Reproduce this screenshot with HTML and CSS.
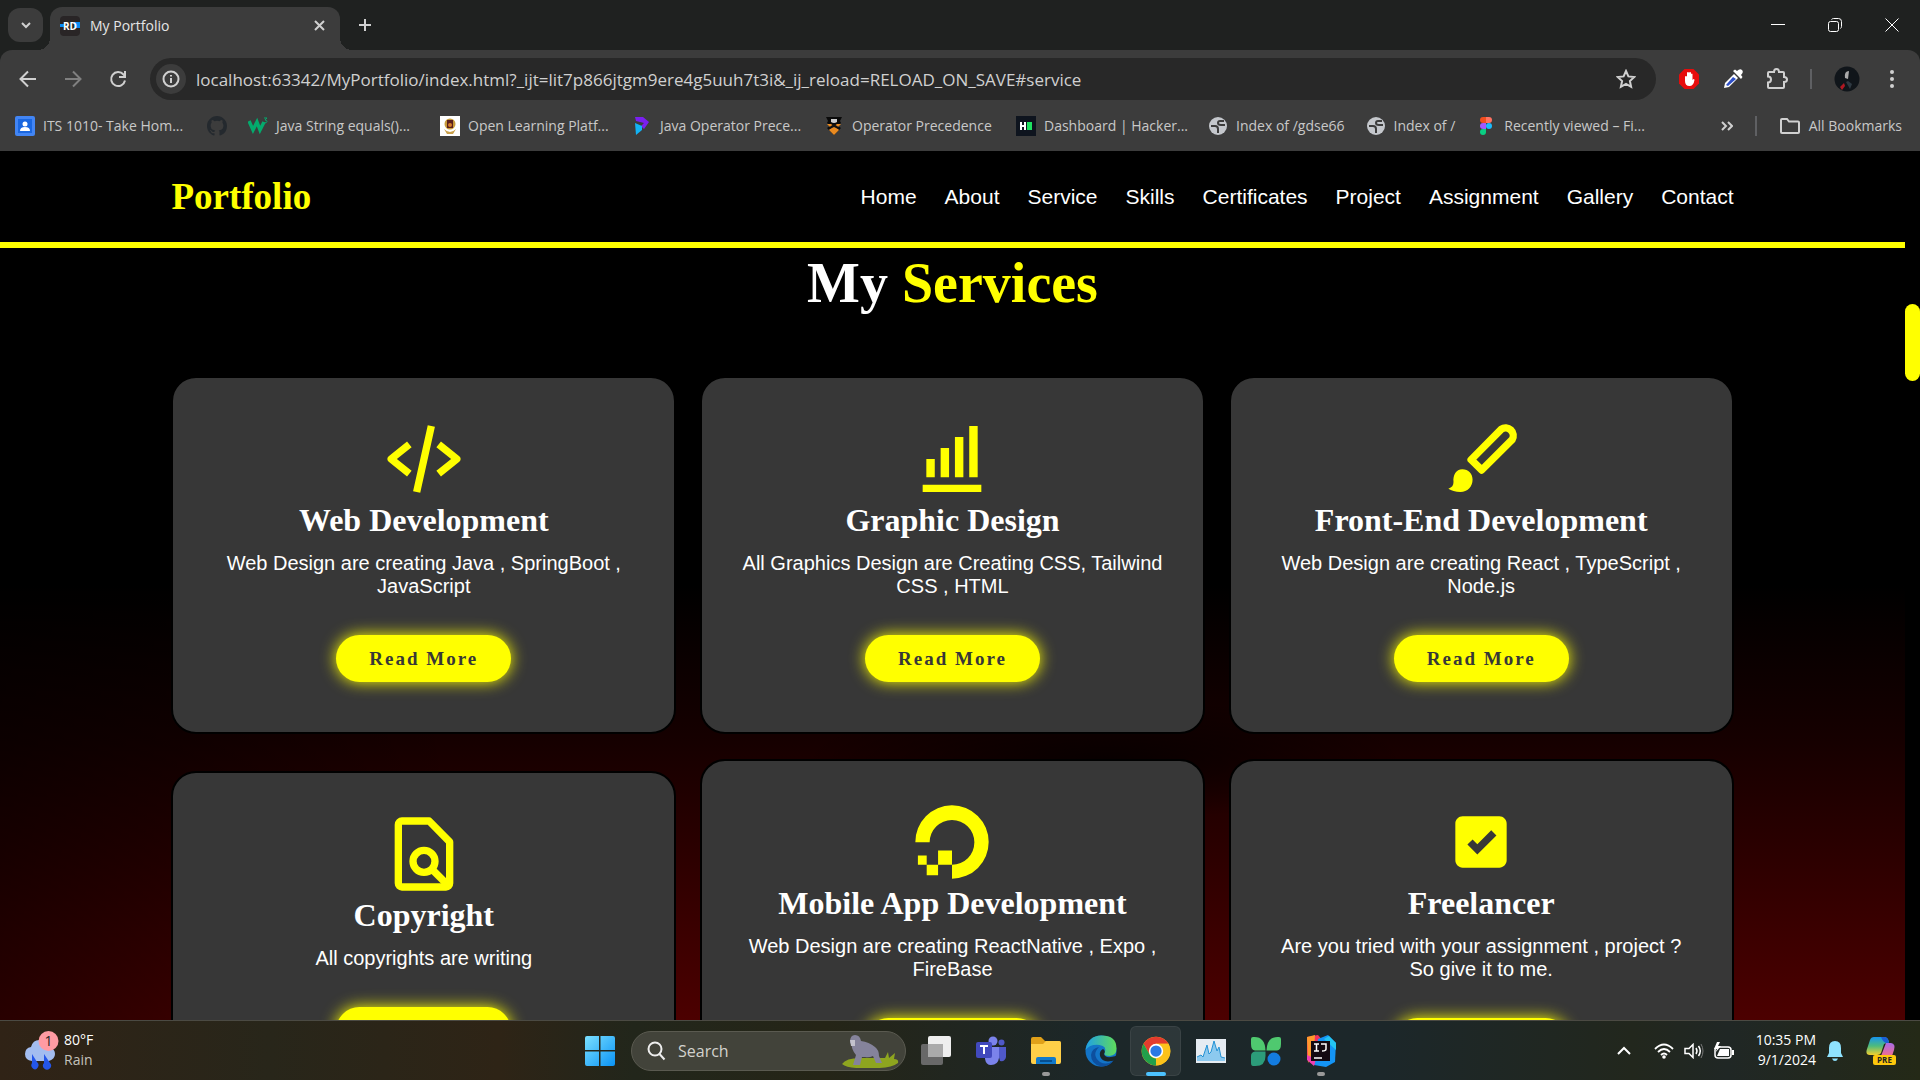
FILE: index.html
```html
<!DOCTYPE html>
<html lang="en">
<head>
<meta charset="utf-8">
<title>My Portfolio</title>
<link rel="stylesheet" href="styles.css">
</head>
<body>
<header class="browser">
  <div class="tabstrip">
    <button class="tab-search" aria-label="Search tabs"><svg width="12" height="12" viewBox="0 0 12 12"><path class="ln bright" d="M2 4l4 4 4-4"/></svg></button>
    <div class="tab">
      <svg width="20" height="20" viewBox="0 0 20 20"><rect width="20" height="20" rx="4" fill="#292526"/><path d="M0 8h5v3H0zM14 6h6v6h-6z" fill="#0a8cf5"/><text x="10" y="14" class="fav-rd">RD</text></svg>
      <span class="tab-title">My Portfolio</span>
      <button class="plain" aria-label="Close tab"><svg width="12" height="12" viewBox="0 0 12 12"><path class="ln bright" d="M1 1l9 9M10 1l-9 9"/></svg></button>
    </div>
    <button class="plain new-tab" aria-label="New tab"><svg width="14" height="14" viewBox="0 0 14 14"><path class="ln bright" d="M7 1v12M1 7h12"/></svg></button>
    <div class="window-buttons">
      <button class="plain" aria-label="Minimize"><svg width="14" height="14" viewBox="0 0 14 14"><path class="thin" d="M0 6.500h14"/></svg></button>
      <button class="plain" aria-label="Restore"><svg width="14" height="14" viewBox="0 0 14 14"><rect class="thin" x=".5" y="3.500" width="10" height="10" rx="2"/><path class="thin" d="M3.500 1.500q1-1 2-1h5q3 0 3 3v5q0 1-1 2"/></svg></button>
      <button class="plain" aria-label="Close"><svg width="14" height="14" viewBox="0 0 14 14"><path class="thin" d="M.5.5l13 13M13.500.5l-13 13"/></svg></button>
    </div>
  </div>
  <div class="toolbar">
    <button class="plain nav-btn" aria-label="Back"><svg width="18" height="18" viewBox="0 0 18 18"><path class="ln bright" d="M17 9H2M9 1.500L1.500 9 9 16.500"/></svg></button>
    <button class="plain nav-btn" aria-label="Forward"><svg width="18" height="18" viewBox="0 0 18 18"><path class="ln dim" d="M1 9h15M9 1.500L16.500 9 9 16.500"/></svg></button>
    <button class="plain nav-btn" aria-label="Reload"><svg width="18" height="18" viewBox="0 0 18 18"><path class="ln bright" d="M16 10.500A7 7 0 1 1 14.500 4.500L16 6.500M16 1v6h-6"/></svg></button>
    <div class="omnibox">
      <span class="site-info"><svg width="18" height="18" viewBox="0 0 18 18"><circle class="ln bright" cx="9" cy="9" r="7.500"/><path class="ln bright" d="M9 8v5M9 5v1.600"/></svg></span>
      <input class="url" type="text" aria-label="Address" value="localhost:63342/MyPortfolio/index.html?_ijt=lit7p866jtgm9ere4g5uuh7t3i&amp;_ij_reload=RELOAD_ON_SAVE#service">
      <button class="plain" aria-label="Bookmark this page"><svg width="20" height="20" viewBox="0 0 20 20"><path class="ln bright" d="M10 2l2.400 5.400 5.900.6-4.400 4 1.200 5.800L10 14.800l-5.100 3L6.100 12 1.700 8l5.900-.6z"/></svg></button>
    </div>
    <div class="extensions">
      <svg width="22" height="22" viewBox="0 0 22 22"><path d="M6.500 1h9L21 6.500v9L15.500 21h-9L1 15.500v-9z" fill="#e60c0c"/><path d="M7 9q0-1 1-1t1 1V5q0-1 1-1 .7 0 1 1 .3-1 1-1 1 0 1 1v1q1-1 1.500 0v6l1-1q1 0 1 1-1 6-5 6-4.500 0-4.500-5z" fill="#fff"/></svg>
      <svg width="22" height="22" viewBox="0 0 22 22"><path d="M12 6L3 15l-1 5 5-1 9-9z" fill="#fff"/><path d="M11 9l3 2-8 7-2-1z" fill="#2f50c8"/><path d="M11 3l8 8 1.500-2-1.500-2q3-3 1-5t-5 1l-2-1.500z" fill="#fff"/></svg>
      <svg width="22" height="22" viewBox="0 0 22 22"><path class="ln bright" d="M2 5q0-1 1-1h5q0-3 2.500-3T13 4h4q1 0 1 1v4q3 0 3 2.500T18 14v5q0 1-1 1H3q-1 0-1-1v-4.500q3 0 3-3t-3-3z"/></svg>
      <span class="divider"></span>
      <svg width="26" height="26" viewBox="0 0 26 26"><circle cx="13" cy="13" r="12.500" fill="#10151a"/><path d="M11 12q-1-7 4-7l-1 8z" fill="#aaa"/><path d="M6 21l4-4 1 3-3 4z" fill="#b01822"/><path d="M12 16l2-1 4 3-2 5z" fill="#2f3a42"/></svg>
      <svg class="menu-dots" width="6" height="20" viewBox="0 0 6 20"><g fill="#d0d0d0"><circle cx="3" cy="3" r="2"/><circle cx="3" cy="10" r="2"/><circle cx="3" cy="17" r="2"/></g></svg>
    </div>
  </div>
  <nav class="bookmarks" aria-label="Bookmarks">
    <a class="bm wide" href="#"><svg width="20" height="20" viewBox="0 0 20 20"><rect width="20" height="20" rx="2" fill="#4285f4"/><rect x="3" y="3" width="14" height="14" fill="#1a67e0"/><circle cx="10" cy="8" r="2.500" fill="#fff"/><path d="M5 15q0-4 5-4t5 4z" fill="#fff"/></svg>ITS 1010- Take Hom...</a>
    <a class="bm" href="#" aria-label="GitHub"><svg width="20" height="20" viewBox="0 0 16 16"><path fill="#24292e" d="M8 0C3.580 0 0 3.580 0 8c0 3.540 2.290 6.530 5.470 7.590.4.070.55-.17.55-.38 0-.19-.01-.82-.01-1.490-2.010.37-2.530-.49-2.690-.94-.09-.23-.48-.94-.82-1.130-.28-.15-.68-.52-.01-.53.63-.01 1.080.58 1.230.82.72 1.210 1.870.87 2.330.66.070-.52.28-.87.51-1.070-1.780-.2-3.640-.89-3.640-3.950 0-.87.31-1.590.82-2.150-.08-.2-.36-1.020.08-2.120 0 0 .67-.21 2.200.82a7.600 7.600 0 0 1 4 0c1.530-1.040 2.200-.82 2.200-.82.44 1.100.16 1.920.08 2.120.51.56.82 1.270.82 2.150 0 3.070-1.870 3.750-3.650 3.950.29.25.54.73.54 1.480 0 1.070-.01 1.930-.01 2.200 0 .21.15.46.55.38A8 8 0 0 0 16 8c0-4.420-3.580-8-8-8z"/></svg></a>
    <a class="bm wide" href="#"><svg width="20" height="20" viewBox="0 0 20 20"><path d="M1 5l4 9 4-8 3 8 4-8" fill="none" stroke="#04aa6d" stroke-width="3.500"/><path d="M16 2h3l-2 2q2 0 2 1.500T16 7" fill="none" stroke="#04aa6d"/></svg>Java String equals()...</a>
    <a class="bm wide" href="#"><svg width="20" height="20" viewBox="0 0 20 20"><rect width="20" height="20" fill="#fff"/><circle cx="10" cy="8" r="5.500" fill="#c79b3b"/><path d="M7 4h6v8H7z" fill="#5a1f1c"/><circle cx="10" cy="9" r="2" fill="#d27b27"/><path d="M4 13q6 6 12 0l-3 5H7z" fill="#c9a04b"/></svg>Open Learning Platf...</a>
    <a class="bm wide" href="#"><svg width="20" height="20" viewBox="0 0 20 20"><path d="M3 1h8l6 5-5 7-3-3 3-3-8-2z" fill="#7a1ff0"/><path d="M3 7l7 3v4l-6 5z" fill="#12b3f5"/></svg>Java Operator Prece...</a>
    <a class="bm wide" href="#"><svg width="20" height="20" viewBox="0 0 20 20"><path d="M2 1h16l-2 4 1 2-3 3 3 2-7 7-7-7 3-2-3-3 1-2z" fill="#0a0a0a"/><path d="M7 3h6v3q-3 2-6 0z" fill="#ccc"/><path d="M3 8l4 0 3 2 3-2 4 0-4 4 2 2-5 5-5-5 2-2z" fill="#e98a20"/><path d="M4 12l6-4 6 4-2 1-4-2-4 2z" fill="#111"/></svg>Operator Precedence</a>
    <a class="bm wide" href="#"><svg width="20" height="20" viewBox="0 0 20 20"><rect width="20" height="20" fill="#0e141e"/><path d="M4 6h2v3h2V6h2v8H8v-3H6v3H4z" fill="#fff"/><path d="M11 6h5v8h-5z" fill="#1ee25f"/></svg>Dashboard | Hacker...</a>
    <a class="bm" href="#"><svg width="20" height="20" viewBox="0 0 20 20"><circle cx="10" cy="10" r="9" fill="#c4c7cc"/><path d="M3 10h4q3 0 3 3v4M16 5h-4q-2 0-2 2t3 2h4" fill="none" stroke="#3c3c3c" stroke-width="2"/></svg>Index of /gdse66</a>
    <a class="bm" href="#"><svg width="20" height="20" viewBox="0 0 20 20"><circle cx="10" cy="10" r="9" fill="#c4c7cc"/><path d="M3 10h4q3 0 3 3v4M16 5h-4q-2 0-2 2t3 2h4" fill="none" stroke="#3c3c3c" stroke-width="2"/></svg>Index of /</a>
    <a class="bm" href="#"><svg width="20" height="20" viewBox="0 0 20 20"><path d="M10 1H7a3 3 0 0 0 0 6h3z" fill="#f24e1e"/><path d="M10 1h3a3 3 0 0 1 0 6h-3z" fill="#ff7262"/><path d="M10 7H7a3 3 0 0 0 0 6h3z" fill="#a259ff"/><circle cx="13" cy="10" r="3" fill="#1abcfe"/><path d="M10 13H7a3 3 0 1 0 3 3z" fill="#0acf83"/></svg>Recently viewed – Fi...</a>
    <div class="bm-end">
      <button class="plain" aria-label="More bookmarks"><svg width="12" height="12" viewBox="0 0 12 12"><path class="ln bright" d="M1 2l4 4-4 4M7 2l4 4-4 4"/></svg></button>
      <span class="divider"></span>
      <a class="bm" href="#"><svg width="22" height="18" viewBox="0 0 22 18"><path class="ln bright" d="M2 3q0-1 1-1h5l2 2.500h9q1 0 1 1V15q0 1-1 1H3q-1 0-1-1z"/></svg>All Bookmarks</a>
    </div>
  </nav>
</header>

<div class="viewport">
  <div class="page">
    <header class="site-header">
      <a class="logo" href="#home">Portfolio</a>
      <nav class="site-nav">
        <a href="#home">Home</a><a href="#about">About</a><a href="#service">Service</a><a href="#skills">Skills</a><a href="#certificates">Certificates</a><a href="#project">Project</a><a href="#assignment">Assignment</a><a href="#gallery">Gallery</a><a href="#contact">Contact</a>
      </nav>
    </header>
    <main class="services">
      <h2 class="heading">My <span>Services</span></h2>
      <div class="cards">
        <article class="card">
          <svg class="card-icon" viewBox="0 0 24 24"><path d="M7.375 16.781l1.250-1.562L4.601 12l4.024-3.219-1.250-1.562-5 4a1 1 0 0 0 0 1.562l5 4zm9.250-9.562l-1.250 1.562L19.399 12l-4.024 3.219 1.250 1.562 5-4a1 1 0 0 0 0-1.562l-5-4zm-1.649-4.003l-4 18-1.953-.434 4-18z"/></svg>
          <h3>Web Development</h3>
          <p>Web Design are creating Java , SpringBoot , JavaScript</p>
          <a class="btn" href="#web">Read More</a>
        </article>
        <article class="card">
          <svg class="card-icon" viewBox="0 0 24 24"><path d="M4 19h16v2H4zM5 12h2.300v5H5zM8.900 9h2.300v8H8.900zM12.800 6h2.300v11h-2.300zM16.700 3H19v14h-2.300z"/></svg>
          <h3>Graphic Design</h3>
          <p>All Graphics Design are Creating CSS, Tailwind CSS , HTML</p>
          <a class="btn" href="#graphic">Read More</a>
        </article>
        <article class="card">
          <svg class="card-icon" viewBox="0 0 24 24"><path class="stroke" d="M9.300 12.200L17.500 3.900A2.100 2.100 0 0 1 20.500 6.700L12.200 15z"/><path d="M6.900 14.800C8.600 14.800 9.700 16.100 9.700 17.600 9.700 19.600 8.300 21 6.400 21 5 21 3.900 20.600 3.100 20.100 4.100 19.800 4.500 19.200 4.500 18.300 4.300 16.400 5.200 14.800 6.900 14.800z"/></svg>
          <h3>Front-End Development</h3>
          <p>Web Design are creating React , TypeScript , Node.js</p>
          <a class="btn" href="#frontend">Read More</a>
        </article>
        <article class="card">
          <svg class="card-icon" viewBox="0 0 24 24"><path class="stroke" d="M6 3h7.400L19 8.700V20a1 1 0 0 1-1 1H6a1 1 0 0 1-1-1V4a1 1 0 0 1 1-1z"/><circle class="stroke" cx="12" cy="14" r="3"/><path class="stroke" d="M14.200 16.200L18.500 20.500"/></svg>
          <h3>Copyright</h3>
          <p>All copyrights are writing</p>
          <a class="btn" href="#copyright">Read More</a>
        </article>
        <article class="card">
          <svg class="card-icon" viewBox="0 0 24 24"><path d="M2 12.100A10 10 0 1 1 12 22V18.200A6.100 6.100 0 1 0 5.900 12.100zM8.200 14.300H12v3.900H8.200zM5.100 18.200h3.100v2.900H5.100zM2.700 15.700h2.400v2.500H2.700z"/></svg>
          <h3>Mobile App Development</h3>
          <p>Web Design are creating ReactNative , Expo , FireBase</p>
          <a class="btn" href="#mobile">Read More</a>
        </article>
        <article class="card">
          <svg class="card-icon" viewBox="0 0 24 24"><path d="M7 5c-1.103 0-2 .897-2 2v10c0 1.103.897 2 2 2h10c1.103 0 2-.897 2-2V7c0-1.103-.897-2-2-2H7zm4 10.414l-2.707-2.707 1.414-1.414L11 12.586l3.793-3.793 1.414 1.414L11 15.414z"/></svg>
          <h3>Freelancer</h3>
          <p>Are you tried with your assignment , project ? So give it to me.</p>
          <a class="btn" href="#freelancer">Read More</a>
        </article>
      </div>
    </main>
  </div>
  <div class="scrollbar"><div class="thumb"></div></div>
</div>

<footer class="taskbar">
  <div class="weather">
    <svg width="36" height="40" viewBox="0 0 36 40"><path d="M8 30q-7-1-7-7t6-7q2-8 10-7 8 1 9 8 5 1 5 6t-6 7z" fill="#a3bdf0"/><path d="M8 23l5 8a3.500 4 0 1 1-5 1zM20 23l6 9a4 4 0 1 1-6 0z" fill="#2456ea"/><circle cx="24.500" cy="10" r="10" fill="#ff9ba3"/><text x="24.500" y="15" class="badge-num">1</text></svg>
    <div class="two-line"><span>80°F</span><span class="muted">Rain</span></div>
  </div>
  <div class="apps">
    <button class="app" aria-label="Start"><svg width="30" height="30" viewBox="0 0 30 30"><defs><linearGradient id="win" x2="1" y2="1"><stop stop-color="#7be0ff"/><stop offset="1" stop-color="#0a93f5"/></linearGradient></defs><path fill="url(#win)" d="M2 0h12v14H0V2q0-2 2-2zM15.500 0H28q2 0 2 2v12H15.500zM0 15.500h14V30H2q-2 0-2-2zM15.500 15.500H30V28q0 2-2 2H15.500z"/></svg></button>
    <label class="search">
      <svg width="20" height="20" viewBox="0 0 20 20"><circle cx="9" cy="8" r="6.500" fill="none" stroke="#eee" stroke-width="2"/><path d="M13.500 13l5 5.500" stroke="#eee" stroke-width="2"/></svg>
      <input type="text" placeholder="Search" aria-label="Search">
      <svg width="58" height="34" viewBox="0 0 58 34"><path d="M1 30q4-6 18-6h25l3-6 1 6 6-5-1 6q5 0 4 4-8 6-30 5-20 1-26-4z" fill="#8ea51f"/><path d="M9 8q0-7 5-7t6 6q8 1 14 6 4 3 4 9l3 7h-6l-3-7q-4 2-8 1l-3 0-2 8h-7l3-10q-5-6-4-11-2 0-2-2z" fill="#85839b"/><path d="M9 6h5v6h-4z" fill="#c3c2cd"/></svg>
    </label>
    <button class="app" aria-label="Task view"><svg width="30" height="30" viewBox="0 0 30 30"><rect y="8" width="22" height="21" rx="2" fill="#686868"/><rect x="7" width="23" height="21" rx="2" fill="#eee"/><path d="M7 8h15v13H7z" fill="#aaa"/></svg></button>
    <button class="app" aria-label="Teams"><svg width="30" height="30" viewBox="0 0 30 30"><circle cx="17" cy="5" r="4.500" fill="#7b83eb"/><circle cx="25.500" cy="6.500" r="3" fill="#5059c9"/><path d="M20 11h10v10q-1 5-6 4z" fill="#5059c9"/><path d="M9 11h14v11q-1 7-8 7-5 0-6-6z" fill="#7b83eb"/><rect y="6" width="16" height="16" rx="2" fill="#4149bd"/><path d="M4 10h8M8 10v8" stroke="#fff" stroke-width="2"/></svg></button>
    <button class="app" aria-label="File Explorer"><svg width="32" height="30" viewBox="0 0 32 30"><path d="M1 3q0-2 2-2h8l4 4h14q2 0 2 3v8H1z" fill="#e0a019"/><path d="M1 8l12 0 3-3h13q2 0 2 2v19q0 2-2 2H3q-2 0-2-2z" fill="#ffcf48"/><path d="M6 28v-5q0-2 2-2h16q2 0 2 2v5z" fill="#127acb"/><path d="M10 25h12" stroke="#064f91" stroke-width="2"/></svg><i class="dot"></i></button>
    <button class="app" aria-label="Edge"><svg width="32" height="32" viewBox="0 0 32 32"><defs><linearGradient id="edge" x2="1"><stop stop-color="#1f9fe6"/><stop offset="1" stop-color="#5fdc5b"/></linearGradient></defs><circle cx="16" cy="16" r="15.500" fill="#1374c7"/><path d="M.5 15Q3 .5 16.500.5q15 0 15 13 0 7-7 7.500-6 0-5-3 3-7-5-8Q5 9 .5 15z" fill="url(#edge)"/><path d="M14 12q-8 8 1 15 7 4 14-2-5 7-13 6.500Q6 29 6 20q1-7 8-8z" fill="#0d4f9e"/><path d="M18 14q3 2 1 5 1 5 12 2v4l-4 1q-10 2-12-5-1-5 3-7z" fill="#1b2628"/></svg></button>
    <button class="app active" aria-label="Chrome"><svg width="30" height="32" viewBox="0 0 48 48"><circle cx="24" cy="24" r="23" fill="#fcc21b"/><path d="M4.100 12.500A23 23 0 0 1 43.900 12.500H24L14 30z" fill="#e33b2e"/><path d="M4.100 12.500L14 29.800q4 6 10 6L24 47A23 23 0 0 1 4.100 12.500z" fill="#229f4b"/><path d="M34 30L24 47A23 23 0 0 0 43.900 12.500H24z" fill="#fcc21b"/><circle cx="24" cy="24" r="11.500" fill="#fff"/><circle cx="24" cy="24" r="9" fill="#2b78e4"/></svg><i class="dot on"></i></button>
    <button class="app" aria-label="Resource Monitor"><svg width="30" height="24" viewBox="0 0 30 24"><rect width="30" height="24" fill="#e6ecf2"/><path d="M1 18l4-2 2 2 4-12 2 9 2-2 3-11 3 10 2-4 2 10 4 1v3H1z" fill="#8cc9ef"/><path d="M1 18l4-2 2 2 4-12 2 9 2-2 3-11 3 10 2-4 2 10 4 1" fill="none" stroke="#2492d4"/></svg></button>
    <button class="app" aria-label="Clover"><svg width="30" height="30" viewBox="0 0 30 30"><path d="M2 1q12-1 12.500 13.500H4Q0 14 0 8V3q0-2 2-2zM28 1q-12-1-12.500 13.500H26q4-.5 4-6.500V3q0-2-2-2z" fill="#4fc96f"/><path d="M4 15.500h10.500V20q0 10-10 10H2q-2 0-2-3v-7q0-4 4-4.500z" fill="#2c9c7a"/><circle cx="23" cy="23" r="6.500" fill="#137ce0"/></svg></button>
    <button class="app" aria-label="IntelliJ IDEA"><svg width="30" height="32" viewBox="0 0 30 32"><path d="M1 2l11-2 5 6-8 24-8-8z" fill="#f3315f"/><path d="M1 2l8-2-1 16-6 12z" fill="#ff9a2c"/><path d="M12 4L22 0l8 8-1 19-9 5-12-2z" fill="#1494f5"/><path d="M18 4l5-3 7 7v7z" fill="#24c4f2"/><path d="M1 20l9 4-2 7-7-6z" fill="#f13fb2"/><path d="M5 6h19v20H5z" fill="#140a12"/><path d="M8 9h5M10.500 9v7M8 16h5M15 9h5v5q0 2-4 2M8 23h8" fill="none" stroke="#fff" stroke-width="1.500"/></svg><i class="dot"></i></button>
  </div>
  <div class="tray">
    <svg width="16" height="10" viewBox="0 0 16 10"><path d="M2 8l6-6 6 6" fill="none" stroke="#fff" stroke-width="2"/></svg>
    <svg class="wifi" width="20" height="16" viewBox="0 0 20 16"><g fill="none" stroke="#fff" stroke-width="1.800"><path d="M1 6q9-9 18 0M4 9q6-6 12 0M7 12q3-3 6 0"/></g><circle cx="10" cy="14" r="1.800" fill="#fff"/></svg>
    <svg width="20" height="16" viewBox="0 0 20 16"><path d="M1 5.500h4L9 1.500v13l-4-4H1z" fill="none" stroke="#fff" stroke-width="1.500"/><path d="M12 5q2 3 0 6M14.500 3q3.500 5 0 10" fill="none" stroke="#fff" stroke-width="1.500"/><path d="M17 1q4 7 0 14" fill="none" stroke="#777"/></svg>
    <svg width="20" height="18" viewBox="0 0 20 18"><rect x="1" y="5" width="16" height="11" rx="3" fill="none" stroke="#fff" stroke-width="1.500"/><path d="M3 14l3-7h9v7zM18 8h2v5h-2z" fill="#fff"/><path d="M3 0L0 7h3L1 11l6-7H4l2-4z" fill="#fff"/></svg>
    <div class="two-line clock"><span>10:35 PM</span><span>9/1/2024</span></div>
    <svg width="18" height="20" viewBox="0 0 18 20"><path d="M9 0q6 0 6 7v5l2 4H1l2-4V7q0-7 6-7zM6 17.500h6q-1 2.500-3 2.500t-3-2.500z" fill="#8fe3ff"/></svg>
    <svg class="copilot" width="32" height="30" viewBox="0 0 32 30"><defs><linearGradient id="cpa" x2="0" y2="1"><stop stop-color="#1795ee"/><stop offset=".5" stop-color="#4dbb7d"/><stop offset="1" stop-color="#f5d02e"/></linearGradient><linearGradient id="cpb" x2="0" y2="1"><stop stop-color="#a86be8"/><stop offset="1" stop-color="#f26d8d"/></linearGradient></defs><path d="M8 1h10q4 0 5 5l-5 2-3 9q-1 2-4 2H4q-5 0-3-6l3-9q1-3 4-3z" fill="url(#cpa)"/><path d="M15 1h4q3 0 4 6h-3q-3-1-5-6z" fill="#1b5fd6"/><path d="M20 7h5q5 1 3 7l-2 6h-11z" fill="url(#cpb)"/><rect x="7" y="19" width="23" height="10" rx="2" fill="#fdc70c"/><text x="18.500" y="27" class="pre">PRE</text></svg>
  </div>
</footer>
</body>
</html>
```
FILE: styles.css
```css
* { box-sizing: border-box; margin: 0; padding: 0; }

body {
  height: 100vh;
  display: flex;
  flex-direction: column;
  overflow: hidden;
  background: #000;
  font-family: "Open Sans", "Noto Sans", sans-serif;
}

a { color: inherit; text-decoration: none; }
svg { flex: none; display: block; }
button { font: inherit; color: inherit; border: 0; }
input { font: inherit; color: inherit; border: 0; background: none; outline: 0; }

.plain { background: none; display: grid; place-items: center; }
.ln { fill: none; stroke-width: 2; }
.bright { stroke: #d0d0d0; }
.dim { stroke: #808080; }
.thin { fill: none; stroke: #fff; stroke-width: 1; }
.fav-rd { font: bold 10px "Open Sans", sans-serif; fill: #fff; text-anchor: middle; }

/* Browser frame */
.browser { flex: none; background: #1f2120; color: #c8c8c8; }

.tabstrip {
  display: flex;
  align-items: center;
  height: 50px;
  padding-left: 8px;
}
.tab-search {
  display: grid;
  place-items: center;
  width: 35px;
  height: 34px;
  margin-right: 7px;
  border-radius: 12px;
  background: #3c3c3c;
}
.tab {
  position: relative;
  display: flex;
  align-items: center;
  gap: 10px;
  align-self: flex-end;
  width: 290px;
  height: 43px;
  padding: 0 14px 6px 10px;
  border-radius: 12px 12px 0 0;
  background: #3c3c3c;
  color: #e6e6e6;
}
.tab::before,
.tab::after {
  content: "";
  position: absolute;
  bottom: 0;
  width: 12px;
  height: 12px;
}
.tab::before { right: 100%; background: radial-gradient(circle at 0 0, transparent 12px, #3c3c3c 12px); }
.tab::after { left: 100%; background: radial-gradient(circle at 100% 0, transparent 12px, #3c3c3c 12px); }
.tab-title { flex: 1; font-size: 14px; }
.new-tab { width: 50px; height: 50px; }
.window-buttons { display: flex; margin-left: auto; }
.window-buttons .plain { width: 57px; height: 50px; }

.toolbar {
  display: flex;
  align-items: center;
  height: 58px;
  padding: 0 25px 0 5px;
  border-radius: 12px 12px 0 0;
  background: #3c3c3c;
}
.nav-btn { width: 45px; height: 42px; }
.omnibox {
  flex: 1;
  display: flex;
  align-items: center;
  height: 42px;
  margin-left: 10px;
  padding: 0 20px 0 6px;
  border-radius: 21px;
  background: #282828;
}
.site-info {
  display: grid;
  place-items: center;
  width: 30px;
  height: 30px;
  border-radius: 50%;
  background: #3c3c3c;
}
.url { flex: 1; margin-left: 10px; font-size: 17px; color: #d0d0d0; }
.extensions { display: flex; align-items: center; gap: 22px; margin-left: 22px; }
.menu-dots { margin-left: 7px; }
.divider { width: 2px; height: 20px; background: #5f6063; }

.bookmarks {
  display: flex;
  align-items: center;
  height: 43px;
  padding: 0 18px 8px 15px;
  background: #3c3c3c;
  font-size: 14px;
  white-space: nowrap;
}
.bm { display: flex; align-items: center; gap: 8px; margin-right: 21px; }
.bm.wide { width: 171px; }
.bm-end { display: flex; align-items: center; gap: 22px; margin-left: auto; }
.bm-end .bm { margin: 0; }

/* Web page */
.viewport { flex: 1; min-height: 0; display: flex; overflow: hidden; }
.page {
  flex: 1;
  background:
    radial-gradient(ellipse 300px 60px at 58% 70%, #000000b0, transparent),
    linear-gradient(90deg, #00000078, transparent 24%),
    linear-gradient(#000 50%, #160000 68%, #4c0000);
}
.scrollbar { width: 15px; padding-top: 153px; background: #000; }
.thumb { height: 77px; border-radius: 8px; background: #ff0; }

.site-header {
  display: flex;
  align-items: center;
  justify-content: space-between;
  height: 97px;
  padding: 0 9%;
  border-bottom: 6px solid #ff0;
  background: #000;
}
.logo { font: bold 37px "Liberation Serif", serif; color: #ff0; }
.site-nav {
  display: flex;
  gap: 28px;
  font: 21px "Liberation Sans", sans-serif;
  color: #fff;
}

.services { padding: 3px 9% 0; text-align: center; color: #fff; }
.heading { font: bold 56px/64px "Liberation Serif", serif; }
.heading span { color: #ff0; }
.cards {
  display: grid;
  grid-template-columns: repeat(3, 1fr);
  align-items: center;
  gap: 25px 24px;
  margin-top: 61px;
}
.card {
  padding: 37px 38px 50px;
  border: 2px solid #000;
  border-radius: 25px;
  background: #373737;
}
.card-icon { width: 88px; height: 88px; margin: 0 auto; fill: #ff0; }
.card-icon .stroke { fill: none; stroke: #ff0; stroke-width: 2; stroke-linejoin: round; }
.card h3 { font: bold 32px/34px "Liberation Serif", serif; }
.card p { margin: 15px 0 37px; font: 20px/23px "Liberation Sans", sans-serif; }
.btn {
  display: inline-block;
  vertical-align: top;
  padding: 0 33px;
  border-radius: 24px;
  background: #ff0;
  box-shadow: 0 0 16px #ff0;
  color: #373737;
  font: bold 19px/47px "Liberation Serif", serif;
  letter-spacing: 2px;
}

/* Taskbar */
.taskbar {
  flex: none;
  display: grid;
  grid-template-columns: 1fr auto 1fr;
  align-items: center;
  height: 60px;
  border-top: 1px solid #4b4a43;
  background: linear-gradient(90deg, #302316, #28261a 14%, #2e2416 26%, #22261b 33%, #252517 43%, #1c2729 57%, #1c272a 72%, #22271d 85%, #202725 90%, #242917);
  color: #fff;
  font-size: 14px;
}
.weather { display: flex; align-items: center; gap: 4px; padding-left: 24px; }
.badge-num { font: 14px "Open Sans", sans-serif; text-anchor: middle; fill: #222; }
.two-line { display: grid; line-height: 20px; padding-bottom: 2px; }
.muted { color: #c4c2bc; }
.apps { display: flex; align-items: center; }
.app {
  position: relative;
  display: grid;
  place-items: center;
  width: 51px;
  height: 50px;
  margin: 0 2px;
  border-radius: 6px;
  background: none;
}
.app.active { background: #ffffff14; box-shadow: inset 0 0 0 1px #ffffff10; }
.dot {
  position: absolute;
  bottom: 0;
  left: 50%;
  width: 8px;
  height: 4px;
  margin-left: -4px;
  border-radius: 2px;
  background: #999;
}
.dot.on { width: 20px; margin-left: -10px; background: #4cc2ff; }
.search {
  display: flex;
  align-items: center;
  gap: 12px;
  width: 275px;
  height: 40px;
  margin: 0 2px 0 4px;
  padding: 0 6px 0 14px;
  border: 1px solid #5a5a50;
  border-radius: 20px;
  background: #42433a;
}
.search input { flex: 1; min-width: 0; font-size: 16px; }
.search input::placeholder { color: #d2d2cd; opacity: 1; }
.tray { display: flex; align-items: center; justify-content: flex-end; gap: 10px; padding-right: 22px; }
.wifi { margin-left: 12px; }
.clock { margin-left: 12px; text-align: right; }
.copilot { margin-left: 12px; }
.pre { font: bold 8px "Open Sans", sans-serif; text-anchor: middle; fill: #222; }
```
